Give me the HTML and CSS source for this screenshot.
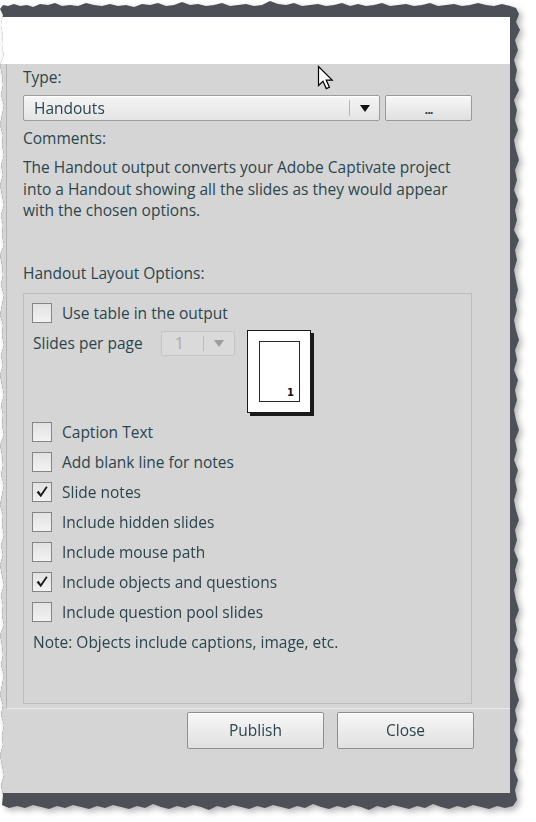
FILE: index.html
```html
<!DOCTYPE html>
<html>
<head>
<meta charset="utf-8">
<title>Publish - Handouts</title>
<link rel="stylesheet" href="styles.css">
</head>
<body>
<div class="shot">
  <div class="frame">
    <div class="dialog">
      <div class="titlearea"></div>
      <div class="panel">
        <div class="label">Type:</div>
        <div class="typerow">
          <div class="combo">
            <span class="combo-text">Handouts</span>
            <span class="combo-sep"></span>
            <span class="combo-arrow"></span>
          </div>
          <div class="btn btn-dots">...</div>
        </div>
        <div class="label label-comments">Comments:</div>
        <p class="comments">The Handout output converts your Adobe Captivate project<br>into a Handout showing all the slides as they would appear<br>with the chosen options.</p>
        <div class="label label-layout">Handout Layout Options:</div>
        <div class="group">
          <label class="check"><span class="box"></span><span class="check-text">Use table in the output</span></label>
          <div class="slides-row">
            <span class="slides-text">Slides per page</span>
            <div class="combo combo-disabled">
              <span class="combo-text">1</span>
              <span class="combo-sep"></span>
              <span class="combo-arrow"></span>
            </div>
            <div class="preview">
              <div class="preview-page"><span class="preview-num">1</span></div>
            </div>
          </div>
          <div class="check-list">
            <label class="check"><span class="box"></span><span class="check-text">Caption Text</span></label>
            <label class="check"><span class="box"></span><span class="check-text">Add blank line for notes</span></label>
            <label class="check"><span class="box"><svg class="tick" viewBox="0 0 20 20"><path d="M4 10.2 L6.3 8.6 L8.6 12.3 L14.6 3.6 L16.2 4.8 L8.7 15.8 Z"/></svg></span><span class="check-text">Slide notes</span></label>
            <label class="check"><span class="box"></span><span class="check-text">Include hidden slides</span></label>
            <label class="check"><span class="box"></span><span class="check-text">Include mouse path</span></label>
            <label class="check"><span class="box"><svg class="tick" viewBox="0 0 20 20"><path d="M4 10.2 L6.3 8.6 L8.6 12.3 L14.6 3.6 L16.2 4.8 L8.7 15.8 Z"/></svg></span><span class="check-text">Include objects and questions</span></label>
            <label class="check"><span class="box"></span><span class="check-text">Include question pool slides</span></label>
          </div>
          <div class="note">Note: Objects include captions, image, etc.</div>
        </div>
      </div>
      <div class="footer">
        <div class="btn btn-big">Publish</div>
        <div class="btn btn-big">Close</div>
      </div>
    </div>
  </div>
</div>
<svg class="cursor" width="18" height="26" viewBox="0 0 18 26"><path d="M1.5 1.5 L1.5 20.5 L6 16.2 L9.3 23.6 L12.4 22.3 L9.2 15.1 L15.2 15.1 Z" fill="#fff" stroke="#000" stroke-width="1.2" stroke-linejoin="miter"/></svg>
</body>
</html>
```

FILE: styles.css
```css
* { box-sizing: border-box; }

html, body {
  margin: 0;
  padding: 0;
  background: #ffffff;
}

body {
  width: 536px;
  height: 822px;
  overflow: hidden;
  position: relative;
  font-family: "Open Sans", "Noto Sans", "Liberation Sans", sans-serif;
  font-size: 15.5px;
  color: #2b454d;
}

.shot {
  width: 522px;
  filter: drop-shadow(3px 3px 3px rgba(0, 0, 0, 0.3));
}

.frame {
  width: 522px;
  height: 812px;
  padding: 17px 12px 0 0;
  background: #4d5157;
  clip-path: polygon(
    0px 9px, 3px 5px, 8px 6px, 14px 4px, 20px 6px, 27px 5px, 33px 7px, 40px 4px, 48px 5px, 55px 3px, 62px 6px, 70px 5px, 78px 6px, 86px 3px, 94px 5px, 102px 6px, 110px 4px, 118px 6px, 126px 5px, 134px 7px, 142px 4px, 150px 5px, 158px 3px, 166px 6px, 174px 5px, 182px 2px, 190px 5px, 198px 4px, 206px 6px, 214px 5px, 222px 3px, 230px 6px, 238px 5px, 246px 4px, 254px 6px, 262px 5px, 270px 1px, 278px 4px, 286px 5px, 294px 3px, 302px 6px, 310px 5px, 318px 4px, 326px 6px, 334px 5px, 342px 3px, 350px 6px, 358px 4px, 366px 6px, 374px 5px, 382px 3px, 390px 6px, 398px 5px, 406px 4px, 414px 6px, 422px 5px, 430px 3px, 438px 6px, 446px 5px, 454px 4px, 462px 6px, 470px 5px, 478px 3px, 486px 5px, 494px 6px, 502px 4px, 510px 6px, 516px 8px,
    519px 14px, 516px 22px, 520px 30px, 515px 40px, 518px 50px, 514px 60px, 517px 70px, 515px 80px, 519px 90px, 514px 100px, 517px 110px, 515px 120px, 518px 130px, 514px 140px, 516px 150px, 519px 160px, 515px 170px, 517px 180px, 514px 190px, 518px 200px, 515px 210px, 517px 220px, 514px 230px, 519px 240px, 515px 250px, 517px 260px, 514px 270px, 516px 280px, 518px 290px, 515px 300px, 517px 310px, 514px 320px, 516px 330px, 519px 340px, 515px 350px, 517px 360px, 514px 370px, 518px 380px, 515px 390px, 517px 400px, 514px 410px, 516px 420px, 519px 430px, 515px 440px, 517px 450px, 514px 460px, 518px 470px, 515px 480px, 517px 490px, 514px 500px, 516px 510px, 519px 520px, 515px 530px, 517px 540px, 514px 550px, 518px 560px, 515px 570px, 517px 580px, 514px 590px, 516px 600px, 519px 610px, 515px 620px, 517px 630px, 514px 640px, 518px 650px, 515px 660px, 517px 670px, 514px 680px, 516px 690px, 519px 700px, 515px 710px, 517px 720px, 514px 730px, 518px 740px, 515px 750px, 517px 760px, 514px 770px, 518px 780px, 515px 790px, 517px 800px, 513px 806px,
    505px 808px, 497px 806px, 489px 809px, 481px 807px, 473px 805px, 465px 808px, 457px 806px, 449px 809px, 441px 807px, 433px 804px, 425px 808px, 417px 806px, 409px 809px, 401px 807px, 393px 805px, 385px 808px, 377px 806px, 369px 810px, 361px 807px, 353px 805px, 345px 808px, 337px 806px, 329px 809px, 321px 807px, 313px 804px, 305px 808px, 297px 806px, 289px 809px, 281px 807px, 273px 805px, 265px 808px, 257px 806px, 249px 809px, 241px 807px, 233px 805px, 225px 808px, 217px 806px, 209px 810px, 201px 807px, 193px 805px, 185px 808px, 177px 806px, 169px 809px, 161px 807px, 153px 804px, 145px 808px, 137px 806px, 129px 809px, 121px 807px, 113px 805px, 105px 808px, 97px 806px, 89px 809px, 81px 807px, 73px 805px, 65px 808px, 57px 806px, 49px 809px, 41px 807px, 33px 805px, 25px 808px, 17px 806px, 9px 808px, 2px 805px,
    3px 795px, 1px 785px, 4px 775px, 2px 765px, 0px 755px, 3px 745px, 2px 735px, 4px 725px, 1px 715px, 3px 705px, 0px 695px, 2px 685px, 4px 675px, 1px 665px, 3px 655px, 2px 645px, 0px 635px, 4px 625px, 2px 615px, 3px 605px, 1px 595px, 4px 585px, 2px 575px, 0px 565px, 3px 555px, 1px 545px, 4px 535px, 2px 525px, 3px 515px, 0px 505px, 2px 495px, 4px 485px, 1px 475px, 3px 465px, 2px 455px, 0px 445px, 4px 435px, 2px 425px, 3px 415px, 1px 405px, 4px 395px, 2px 385px, 0px 375px, 3px 365px, 1px 355px, 4px 345px, 2px 335px, 3px 325px, 0px 315px, 2px 305px, 4px 295px, 1px 285px, 3px 275px, 2px 265px, 0px 255px, 4px 245px, 2px 235px, 3px 225px, 1px 215px, 4px 205px, 2px 195px, 0px 185px, 3px 175px, 1px 165px, 4px 155px, 2px 145px, 3px 135px, 0px 125px, 2px 115px, 4px 105px, 1px 95px, 3px 85px, 2px 75px, 0px 65px, 4px 55px, 2px 45px, 3px 35px, 1px 25px, 3px 15px
  );
}

.dialog {
  width: 510px;
  height: 776px;
  background: #d5d5d5;
  display: flex;
  flex-direction: column;
}

.titlearea {
  height: 47px;
  background: #ffffff;
  flex: none;
}

.panel {
  margin-left: 6px;
  border-left: 1px solid #b3b3b3;
  border-bottom: 1px solid #ebebeb;
  padding: 3px 38px 4px 16px;
  flex: none;
}

.label {
  line-height: 20px;
  height: 20px;
  white-space: nowrap;
}

.label-comments { margin-top: 7px; }
.label-layout { margin-top: 41px; }

.typerow {
  display: flex;
  margin-top: 8px;
  height: 26px;
}

.combo {
  position: relative;
  flex: none;
  width: 357px;
  height: 26px;
  border: 1px solid #9c9c9c;
  border-radius: 2px;
  background: linear-gradient(#f5f5f5, #e4e4e4);
  box-shadow: inset 0 1px 0 #ffffff;
  display: flex;
  align-items: center;
}

.combo-text {
  flex: 1;
  padding-left: 10px;
  line-height: 24px;
  white-space: nowrap;
}

.combo-sep {
  width: 1px;
  height: 16px;
  background: #b5b5b5;
  flex: none;
}

.combo-arrow {
  width: 29px;
  height: 24px;
  flex: none;
  display: flex;
  align-items: center;
  justify-content: center;
}

.combo-arrow::before {
  content: "";
  width: 0;
  height: 0;
  border-left: 5px solid transparent;
  border-right: 5px solid transparent;
  border-top: 7px solid #111111;
  margin-top: 1px;
}

.btn {
  border: 1px solid #9a9a9a;
  border-radius: 2px;
  background: linear-gradient(#f7f7f7, #e0e0e0);
  box-shadow: inset 0 1px 0 #ffffff;
  display: flex;
  align-items: center;
  justify-content: center;
  white-space: nowrap;
}

.btn-dots {
  margin-left: 5px;
  width: 87px;
  height: 26px;
  font-weight: bold;
  font-size: 13px;
  letter-spacing: -1px;
  line-height: 1;
  padding-top: 2px;
}

.comments {
  margin: 9px 0 0 0;
  line-height: 21.5px;
  white-space: nowrap;
}

.group {
  margin-top: 10px;
  height: 411px;
  border: 1px solid #bdbdbd;
  padding: 9px 8px 0 8px;
  display: flex;
  flex-direction: column;
}

.check {
  display: flex;
  align-items: center;
  height: 20px;
}

.box {
  width: 20px;
  height: 20px;
  flex: none;
  border: 1px solid #858585;
  background: linear-gradient(#e2e2e2, #f2f2f2);
  display: flex;
  align-items: center;
  justify-content: center;
}

.tick {
  width: 18px;
  height: 18px;
  fill: #1c1c1c;
}

.check-text {
  margin-left: 10px;
  line-height: 20px;
  white-space: nowrap;
}

.slides-row {
  display: flex;
  align-items: flex-start;
  margin-top: 7px;
  height: 85px;
}

.slides-text {
  width: 129px;
  flex: none;
  padding-left: 1px;
  margin-top: 1px;
  line-height: 25px;
  white-space: nowrap;
}

.combo-disabled {
  width: 74px;
  height: 25px;
  margin-top: 1px;
  border-color: #c4c4c4;
  background: #dadada;
  box-shadow: none;
  color: #a9a9a9;
}

.combo-disabled .combo-text {
  padding-left: 13px;
  line-height: 23px;
}

.combo-disabled .combo-sep {
  height: 15px;
  background: #bcbcbc;
}

.combo-disabled .combo-arrow {
  width: 30px;
  height: 23px;
}

.combo-disabled .combo-arrow::before {
  border-top-color: #9d9d9d;
}

.preview {
  margin-left: 12px;
  width: 64px;
  height: 83px;
  flex: none;
  background: #ffffff;
  border: 1px solid #1a1a1a;
  box-shadow: 3px 3px 0 #1a1a1a;
  padding: 10px 0 0 11px;
}

.preview-page {
  width: 41px;
  height: 61px;
  border: 1px solid #2a2a2a;
  display: flex;
  align-items: flex-end;
  justify-content: flex-end;
  padding: 0 5px 1px 0;
}

.preview-num {
  font-family: "DejaVu Sans", sans-serif;
  font-weight: bold;
  font-size: 10px;
  line-height: 14px;
  color: #111111;
}

.check-list {
  margin-top: 7px;
  display: flex;
  flex-direction: column;
  gap: 10px;
}

.note {
  margin-top: 10px;
  padding-left: 1px;
  line-height: 20px;
  white-space: nowrap;
}

.footer {
  flex: 1;
  display: flex;
  justify-content: flex-end;
  gap: 13px;
  padding: 3px 36px 0 0;
}

.btn-big {
  width: 137px;
  height: 37px;
  border-color: #8f8f8f;
  font-size: 15.5px;
}

.cursor {
  position: absolute;
  left: 317px;
  top: 65px;
}
```
